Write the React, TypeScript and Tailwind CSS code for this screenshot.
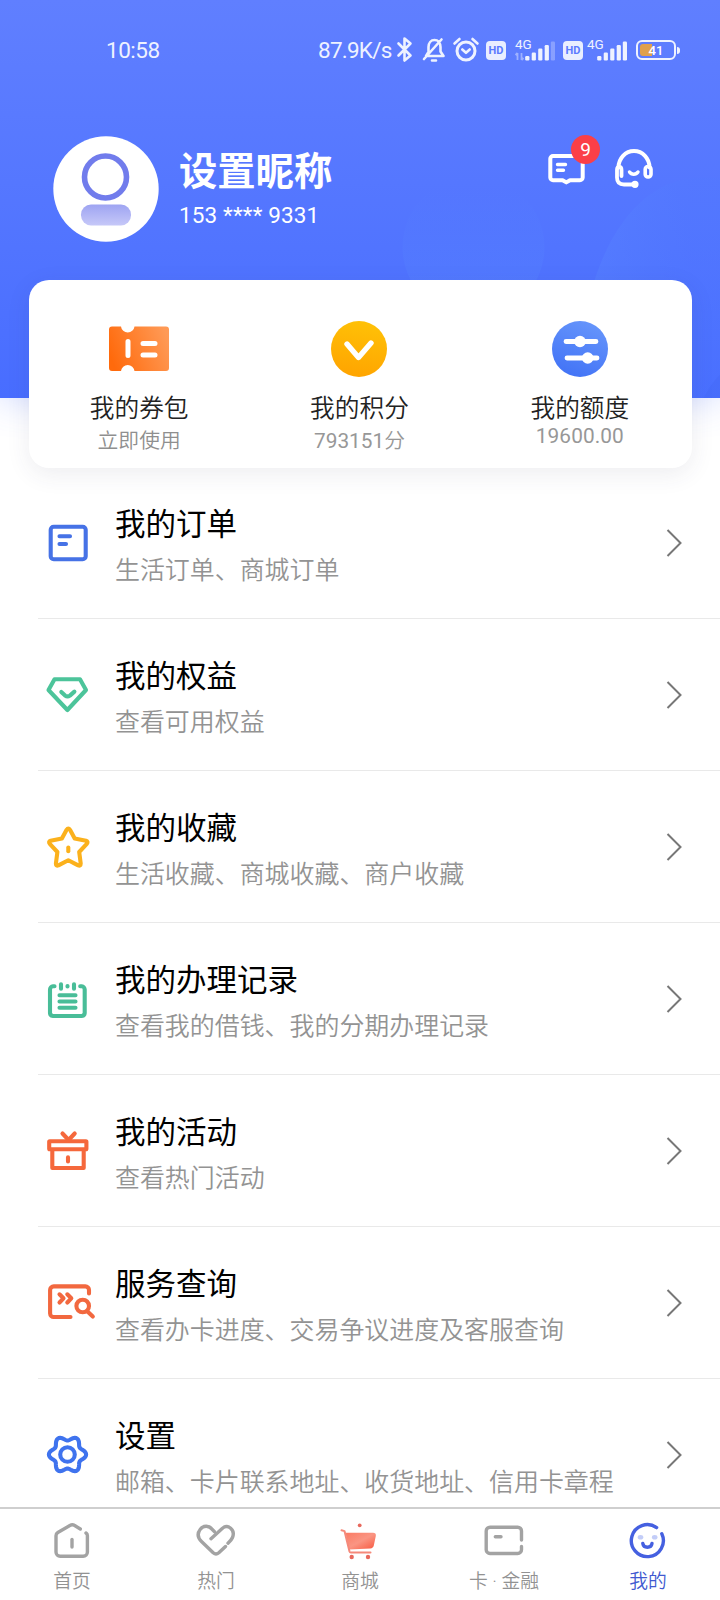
import type { ReactNode } from 'react';

/* ──────────────────────────────────────────────────────────
   Status bar
   ────────────────────────────────────────────────────────── */

function HdBadge() {
  return (
    <span className="flex h-[19px] w-5 items-center justify-center rounded-[4px] bg-[#e9eeff] text-[11px] font-bold leading-none text-[#5b7bff]">
      HD
    </span>
  );
}

function Signal({ weak = false }: { weak?: boolean }) {
  return (
    <div className="relative h-6 w-10">
      <span className="absolute left-0 top-[-2px] text-[13.5px] leading-[14px] text-[#eef2ff]">4G</span>
      <svg className="absolute inset-0" width="40" height="24" viewBox="0 0 40 24" fill="#eef2ff">
        <rect x="10.2" y="17" width="4.2" height="4.5" rx="1.2" />
        <rect x="16.7" y="13.5" width="4.2" height="8" rx="1.2" />
        <rect x="23.2" y="9.5" width="4.2" height="12" rx="1.2" />
        <rect x="29.7" y="6" width="4.2" height="15.5" rx="1.2" />
        <rect x="35.8" y="2.5" width="4.2" height="19" rx="1.2" opacity={weak ? 0.3 : 1} />
        {weak && (
          <path d="M2.5 14v7M0.5 16l2-2M6.5 14v7M8.5 19l-2 2" stroke="#eef2ff" strokeWidth="1.8" opacity="0.45" />
        )}
      </svg>
    </div>
  );
}

function StatusBar() {
  return (
    <div className="flex h-[100px] items-center pl-[106px] text-[#eef2ff]">
      <span className="w-[212px] pt-px text-[22.5px] tracking-[-0.5px]">10:58</span>
      <span className="w-[78px] whitespace-nowrap pt-px text-[22.5px] tracking-[-0.75px]">87.9K/s</span>
      <svg width="86" height="28" viewBox="396 36 86 28" fill="none" stroke="#eef2ff" strokeWidth="2.6" strokeLinecap="round" strokeLinejoin="round">
        <path d="M398.5 43.5l12 12-6 5V38.5l6 5-12 12" />
        <path d="M426 56h17.5l-3-4.5v-4.5c0-4-2.5-7-6-7s-6 3-6 7v5zM424 59l17.5-19.5M432 60.5h4" />
        <circle cx="466" cy="51" r="9" strokeWidth="3" />
        <path d="M462.3 49.5l3.7 3.3 3.7-3.3M454.5 43.5l5-4.5M477.5 43.5l-5-4.5" />
      </svg>
      <div className="ml-1">
        <HdBadge />
      </div>
      <div className="ml-[9px] mt-0.5">
        <Signal weak />
      </div>
      <div className="ml-2">
        <HdBadge />
      </div>
      <div className="ml-1 mt-0.5">
        <Signal />
      </div>
      <div className="ml-[9px] flex items-center">
        <div className="relative flex h-5 w-10 items-center justify-center rounded-[6px] border-2 border-[#eef2ff] text-[13px] font-medium leading-none text-white">
          <span className="absolute left-0.5 top-0.5 h-3 w-3 rounded-l-[3px] bg-[#dfa04d]" />
          <span className="relative">41</span>
        </div>
        <span className="ml-px h-[7px] w-[3px] rounded-r bg-[#eef2ff]" />
      </div>
    </div>
  );
}

/* ──────────────────────────────────────────────────────────
   Profile header
   ────────────────────────────────────────────────────────── */

function HeaderBackdrop() {
  return (
    <svg className="absolute inset-0" width="720" height="398" viewBox="0 0 720 398">
      <defs>
        <linearGradient id="bubble" x1="0" y1="0" x2="0" y2="1">
          <stop offset="0.1" stopColor="#5a8cff" stopOpacity="0" />
          <stop offset="0.8" stopColor="#5a8cff" stopOpacity="0.25" />
        </linearGradient>
        <linearGradient id="dome" x1="0" y1="0" x2="1" y2="0">
          <stop offset="0" stopColor="#5c8bff" stopOpacity="0.35" />
          <stop offset="0.8" stopColor="#4f7aff" stopOpacity="0.2" />
        </linearGradient>
      </defs>
      <circle cx="473.5" cy="247" r="71" fill="url(#bubble)" />
      <path d="M578 398c0-130 50-220 122-220h20v220z" fill="url(#dome)" />
      <circle cx="775" cy="430" r="78" fill="#4468f4" opacity="0.4" />
    </svg>
  );
}

function Avatar() {
  return (
    <svg width="106" height="106" viewBox="0 0 106 106">
      <defs>
        <linearGradient id="torso" x1="0" y1="0" x2="0" y2="1">
          <stop offset="0" stopColor="#9ea4f2" />
          <stop offset="1" stopColor="#c6c8f8" />
        </linearGradient>
      </defs>
      <circle cx="53" cy="53" r="52.7" fill="#fff" />
      <circle cx="52.5" cy="41" r="21" fill="none" stroke="#717cec" strokeWidth="5.6" />
      <rect x="28" y="68.5" width="50" height="21" rx="10" fill="url(#torso)" />
    </svg>
  );
}

function HeaderActions() {
  return (
    <div className="relative h-[60px] w-[120px]">
      <svg width="120" height="60" viewBox="0 0 120 60" fill="none" stroke="#fff" strokeWidth="4" strokeLinecap="round" strokeLinejoin="round">
        <path d="M13 26h27a2.7 2.7 0 0 1 2.7 2.7V47.5a2.7 2.7 0 0 1-2.7 2.7h-10l-3.7 2.2-3.7-2.2H13a2.7 2.7 0 0 1-2.7-2.7V28.7A2.7 2.7 0 0 1 13 26z" />
        <path d="M17.5 34.5h8M17.5 40.2h6" strokeWidth="3.4" />
        <path d="M78.5 37.5a15.5 16.5 0 0 1 31 0" />
        <path d="M81.5 46V40c0-4-4.5-4-4.5 0v7.5q0 7 7 7h10" strokeWidth="3.8" />
        <rect x="105.2" y="36.5" width="5.8" height="10.5" rx="2.8" strokeWidth="3.6" />
        <path d="M89.5 42c2 3 6.500 3 8.500 0" strokeWidth="3.4" />
        <circle cx="95" cy="54.3" r="1.6" />
      </svg>
      <span className="absolute left-[31px] top-[5px] flex h-[29px] w-[29px] items-center justify-center rounded-full bg-[#fb3f48] text-[19px] leading-none text-white">
        9
      </span>
    </div>
  );
}

function Profile() {
  return (
    <div className="flex pl-[53px]">
      <div className="pt-9">
        <Avatar />
      </div>
      <div className="ml-5 w-[361px] pt-[47px]">
        <h1 className="text-[38.3px] font-bold leading-[50px] text-white">设置昵称</h1>
        <p className="mt-[5px] text-[22.5px] leading-[26px] tracking-[0.15px] text-white">153 **** 9331</p>
      </div>
      <div className="pt-[30px]">
        <HeaderActions />
      </div>
    </div>
  );
}

/* ──────────────────────────────────────────────────────────
   Asset card: coupons, points, credit limit
   ────────────────────────────────────────────────────────── */

const couponIcon = (
  <svg width="60" height="60" viewBox="0 0 60 60">
    <defs>
      <linearGradient id="coupon" x1="0" y1="0.6" x2="1" y2="0.3">
        <stop offset="0" stopColor="#ff6a0c" />
        <stop offset="1" stopColor="#ff9a56" />
      </linearGradient>
    </defs>
    <path d="M3 7.5h9a6.8 6.8 0 0 0 13.5 0H57a3 3 0 0 1 3 3v38.5a3 3 0 0 1-3 3H25.5a6.8 6.8 0 0 0-13.5 0H3a3 3 0 0 1-3-3V10.5a3 3 0 0 1 3-3z" fill="url(#coupon)" />
    <path d="M19 22.5v14M34 24.5h12M34 36h12" stroke="#fff" strokeWidth="5" strokeLinecap="round" />
  </svg>
);

const pointsIcon = (
  <svg width="60" height="60" viewBox="0 0 60 60">
    <defs>
      <linearGradient id="points" x1="0.6" y1="0" x2="0.4" y2="1">
        <stop offset="0" stopColor="#ffc107" />
        <stop offset="1" stopColor="#ffa400" />
      </linearGradient>
    </defs>
    <circle cx="30" cy="30" r="28" fill="url(#points)" />
    <path d="M18 25L29.5 38.5 42 24" fill="none" stroke="#fff" strokeWidth="5.4" strokeLinecap="round" strokeLinejoin="round" />
  </svg>
);

const limitIcon = (
  <svg width="60" height="60" viewBox="0 0 60 60">
    <defs>
      <linearGradient id="limit" x1="0.7" y1="0" x2="0.3" y2="1">
        <stop offset="0" stopColor="#6695fb" />
        <stop offset="1" stopColor="#4273f6" />
      </linearGradient>
    </defs>
    <circle cx="30" cy="30" r="28" fill="url(#limit)" />
    <path d="M16 22.5h30M17 39h30" stroke="#fff" strokeWidth="4.8" strokeLinecap="round" />
    <circle cx="30" cy="22.5" r="5.8" fill="#fff" />
    <circle cx="37.7" cy="39" r="5.8" fill="#fff" />
  </svg>
);

function Asset({ icon, title, children }: { icon: ReactNode; title: string; children: ReactNode }) {
  return (
    <div className="flex flex-1 flex-col items-center pt-[39px]">
      {icon}
      <p className="mt-[15px] text-[24.7px] font-[350] leading-[30px] text-[#222]">{title}</p>
      {children}
    </div>
  );
}

function AssetCard() {
  return (
    <div className="relative mx-auto flex h-[188px] w-[663px] rounded-[20px] bg-white pr-[2px] shadow-[0_6px_24px_rgba(60,60,90,0.09)]">
      <Asset icon={couponIcon} title="我的券包">
        <p className="mt-0.5 text-[20.8px] font-[350] leading-[30px] text-[#8f8f8f]">立即使用</p>
      </Asset>
      <Asset icon={pointsIcon} title="我的积分">
        <p className="mt-0.5 text-[20.8px] leading-[30px] text-[#979797]">
          793151<span className="font-[350]">分</span>
        </p>
      </Asset>
      <Asset icon={limitIcon} title="我的额度">
        <p className="-mt-[3px] text-[20.8px] leading-[30px] tracking-[0.1px] text-[#979797]">19600.00</p>
      </Asset>
    </div>
  );
}

/* ──────────────────────────────────────────────────────────
   Menu list
   ────────────────────────────────────────────────────────── */

// Six soft lobes around a 23.5,23.5 centre
const gearPath =
  Array.from({ length: 120 }, (_, i) => {
    const a = (i / 120) * Math.PI * 2;
    const r = 16.3 + 2.3 * Math.cos(6 * a);
    return `${i === 0 ? 'M' : 'L'}${(23.5 + r * Math.cos(a)).toFixed(2)} ${(23.5 + r * Math.sin(a)).toFixed(2)}`;
  }).join('') + 'z';

const menu = [
  {
    title: '我的订单',
    note: '生活订单、商城订单',
    color: '#4672e6',
    art: (
      <>
        <rect x="6.7" y="7.7" width="35" height="32.6" rx="3" />
        <path d="M15.5 17.3h10.5M15.5 25h6.5" />
      </>
    ),
  },
  {
    title: '我的权益',
    note: '查看可用权益',
    color: '#4cc49a',
    art: (
      <>
        <path d="M10.5 8.3h25.500l6 10.700-18.600 20L4.500 19z" />
        <path d="M17.300 21l3.800 3.600q2.400 1.700 4.800 0l4.500-4" />
      </>
    ),
  },
  {
    title: '我的收藏',
    note: '生活收藏、商城收藏、商户收藏',
    color: '#fbb11c',
    art: (
      <>
        <path d="M22.6 6.8q1.7-2.6 3.4 0l4.7 8.7 11.3 2.3q2.6.9.8 3l-7.6 8.2 1.5 11.6q0 2.6-2.5 1.8L24.3 37.2l-9.900 5.200q-2.500.8-2.500-1.800l1.500-11.600-7.600-8.200q-1.800-2.100.8-3l11.300-2.300z" />
        <path d="M24.3 24.5v3.800" />
      </>
    ),
  },
  {
    title: '我的办理记录',
    note: '查看我的借钱、我的分期办理记录',
    color: '#49bd98',
    art: (
      <>
        <path d="M10.5 11.3H9A3.3 3.3 0 0 0 6 14.6V38A3.3 3.3 0 0 0 9 41h28.700A3.3 3.3 0 0 0 40.700 38V14.600a3.3 3.3 0 0 0-3-3.300h-1.500" />
        <path d="M17 9.3v4.500M30 9.3v4.500M23.500 11v.5M15.500 20.200h16M15.500 26.500h16M15.500 32.700h16" />
      </>
    ),
  },
  {
    title: '我的活动',
    note: '查看热门活动',
    color: '#f5683c',
    art: (
      <>
        <rect x="5.2" y="14.3" width="37.2" height="7.9" rx="0.5" />
        <path d="M8.300 23v18h31.400V23M18.500 6.500l6.100 6.500L30.700 6.500M24 30.300v4.200" />
      </>
    ),
  },
  {
    title: '服务查询',
    note: '查看办卡进度、交易争议进度及客服查询',
    color: '#f2683f',
    art: (
      <>
        <path d="M45 14.5v-3.500A3.600 3.600 0 0 0 41.400 7.400H9.700A3.600 3.600 0 0 0 6.100 11v23.500a3.600 3.600 0 0 0 3.600 3.500h16.800" />
        <path d="M15.500 15.300l4 4-4 4.200M23.300 15.300l4 4-4 4.200M43.500 32.500l5.300 5" />
        <circle cx="38.7" cy="27" r="6.3" />
      </>
    ),
  },
  {
    title: '设置',
    note: '邮箱、卡片联系地址、收货地址、信用卡章程',
    color: '#3f73ee',
    art: (
      <>
        <path d={gearPath} />
        <circle cx="23.5" cy="23.5" r="7.3" />
      </>
    ),
  },
];

function MenuList() {
  return (
    <ul className="min-h-0 flex-1 overflow-hidden">
      {menu.map((item) => (
        <li key={item.title} className="ml-[38px] flex h-[152px] border-b border-[#e9e9e9] pl-1.5">
          <svg className="mt-[52px] shrink-0 overflow-visible" width="48" height="48" viewBox="0 0 48 48" fill="none" stroke={item.color} strokeWidth="4.1" strokeLinecap="round" strokeLinejoin="round">
            {item.art}
          </svg>
          <div className="ml-[23px] flex-1 pt-[35px]">
            <p className="text-[30.5px] leading-[46px] text-black">{item.title}</p>
            <p className="text-[24.95px] font-[350] leading-[45px] text-[#939393]">{item.note}</p>
          </div>
          <svg className="mr-[37px] mt-[61px] shrink-0" width="17" height="30" viewBox="0 0 17 30" fill="none" stroke="#777" strokeWidth="2">
            <path d="M1.500 2L14.500 15 1.500 28" />
          </svg>
        </li>
      ))}
    </ul>
  );
}

/* ──────────────────────────────────────────────────────────
   Bottom tabs
   ────────────────────────────────────────────────────────── */

const tabs = [
  {
    label: '首页',
    art: (
      <>
        <path d="M32.3 13l-6-3.700q-2-1.300-4 0L9.800 16.500Q8 17.600 8 19.700V36a4.200 4.200 0 0 0 4.200 4.200h23A4.200 4.200 0 0 0 39.400 36V19.500q0-1.500-1.400-2.500" />
        <path d="M24 23.5v7.500" />
      </>
    ),
  },
  {
    label: '热门',
    art: (
      <path d="M19 22.700L30.200 12.500C36 7.500 43.500 14 40.500 21.500Q39.500 24 36 27.200M33.500 30.500l-6.700 6.300q-2.800 2.400-5.600 0L9.500 25.500C6 22 5 17.500 8.300 13.300c3.300-4.200 8.800-3.900 12 .2l2 1.900" />
    ),
  },
  {
    label: '商城',
    art: (
      <>
        <defs>
          <linearGradient id="basket" x1="0" y1="0" x2="1" y2="1">
            <stop offset="0" stopColor="#fb7a63" />
            <stop offset="0.5" stopColor="#fa9583" />
            <stop offset="1" stopColor="#f8573e" />
          </linearGradient>
        </defs>
        <path d="M9.500 16.800H37q3.300 0 2.800 3.200l-2 9.500q-.6 2.800-3.500 2.900L13 33.500z" fill="url(#basket)" stroke="none" />
        <path d="M5.500 14.200l3 .9L13.500 35.500q.3.900 1.300.9H34.500" stroke="#f5897a" strokeWidth="2" />
        <g fill="#e8685c" stroke="none">
          <circle cx="15.7" cy="41" r="2.2" />
          <circle cx="32" cy="41" r="2.2" />
          <circle cx="23.7" cy="9.3" r="1.9" />
        </g>
      </>
    ),
  },
  {
    label: '卡 · 金融',
    art: (
      <path d="M41.500 24V15a3.800 3.800 0 0 0-3.800-3.800H10A3.800 3.800 0 0 0 6.200 15v18.700a3.800 3.800 0 0 0 3.800 3.800h27.700a3.800 3.800 0 0 0 3.800-3.800V30.500M15.300 20.700h5.700" />
    ),
  },
  {
    label: '我的',
    active: true,
    art: (
      <>
        <path d="M32.600 11.600A16 16 0 1 0 37.800 17.800" />
        <path d="M18.800 27.500c.8 5 8.400 5 9.200 0" />
        <g fill="#c3cdf8" stroke="none">
          <ellipse cx="16.5" cy="21.3" rx="2.8" ry="2.3" />
          <ellipse cx="30.7" cy="21.3" rx="2.8" ry="2.3" />
        </g>
      </>
    ),
  },
];

function TabBar() {
  return (
    <nav className="flex h-[93px] shrink-0 border-t-2 border-[#cfcfcf] bg-white">
      {tabs.map((tab) => (
        <div
          key={tab.label}
          className={`flex flex-1 flex-col items-center pt-[7px] ${tab.active ? 'text-[#4059d0]' : 'text-[#929292]'}`}
        >
          <svg width="48" height="48" viewBox="0 0 48 48" fill="none" stroke={tab.active ? '#4560e0' : '#a3a3a3'} strokeWidth="3.4" strokeLinecap="round" strokeLinejoin="round">
            {tab.art}
          </svg>
          <span className="mt-[5px] text-[18.8px] font-[350] leading-[26px]">{tab.label}</span>
        </div>
      ))}
    </nav>
  );
}

export default function App() {
  return (
    <div className="flex h-[1600px] w-[720px] flex-col overflow-hidden bg-white font-[Roboto,'Noto_Sans_CJK_SC',sans-serif]">
      <div className="relative h-[398px] shrink-0 bg-linear-to-b from-[#607fff] to-[#486dff] shadow-[0_0_36px_rgba(72,109,255,0.3)]">
        <HeaderBackdrop />
        <div className="relative">
          <StatusBar />
          <Profile />
          <div className="absolute inset-x-0 top-[280px] pl-px">
            <AssetCard />
          </div>
        </div>
      </div>
      <div className="h-[69px] shrink-0" />
      <MenuList />
      <TabBar />
    </div>
  );
}
